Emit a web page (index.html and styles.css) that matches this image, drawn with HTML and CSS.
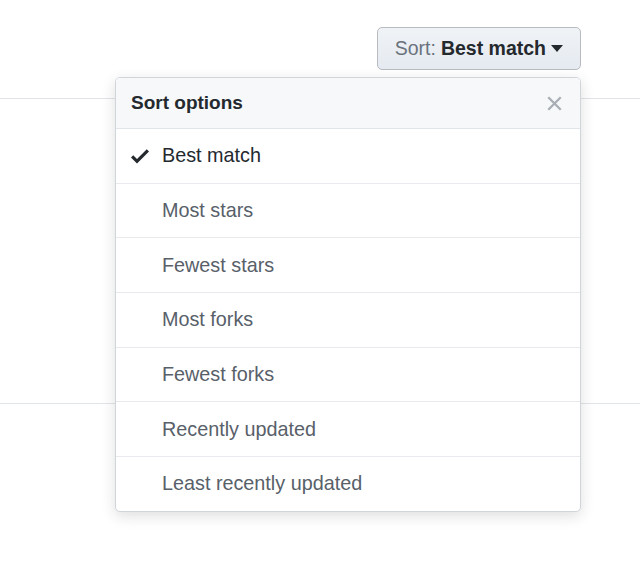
FILE: index.html
```html
<!DOCTYPE html>
<html lang="en">
<head>
    <meta charset="UTF-8">
    <meta name="viewport" content="width=device-width, initial-scale=1.0">
    <title>Sort options</title>
    <link rel="stylesheet" href="styles.css">
</head>
<body>
    <div class="toolbar">
        <div class="sort">
            <button class="sort-button">
                <span class="sort-label">Sort:</span>
                <span class="sort-value">Best match</span>
                <span class="caret"></span>
            </button>

            <div class="menu">
                <div class="menu-header">
                    <span class="menu-title">Sort options</span>
                    <svg class="menu-close" width="15" height="15" viewBox="0 0 12 12">
                        <path d="M1 1L11 11M11 1L1 11" stroke="currentColor" stroke-width="1.8" fill="none"/>
                    </svg>
                </div>
                <div class="menu-item selected">
                    <svg class="check" width="18" height="24" viewBox="0 0 12 16">
                        <path d="M12 5l-8 8-4-4 1.5-1.5L4 10l6.5-6.5L12 5z" fill="currentColor"/>
                    </svg>
                    <span>Best match</span>
                </div>
                <div class="menu-item"><span>Most stars</span></div>
                <div class="menu-item"><span>Fewest stars</span></div>
                <div class="menu-item"><span>Most forks</span></div>
                <div class="menu-item"><span>Fewest forks</span></div>
                <div class="menu-item"><span>Recently updated</span></div>
                <div class="menu-item"><span>Least recently updated</span></div>
            </div>
        </div>
    </div>

    <div class="results">
        <div class="result"></div>
    </div>
</body>
</html>
```

FILE: styles.css
```css
html, body {
    min-height: 100%;
    height: 100%;
}

body {
    font-family: "Liberation Sans", Arial, sans-serif;
    margin: 0;
    padding: 0;
    background-color: #fff;
    color: #24292e;
}

.toolbar {
    display: flex;
    justify-content: flex-end;
    padding: 27px 59px 0 0;
}

.sort {
    position: relative;
    z-index: 2;
}

.sort-button {
    display: flex;
    align-items: center;
    height: 43px;
    padding: 0 17px 0 17px;
    font-family: inherit;
    font-size: 19.5px;
    background-image: linear-gradient(-180deg, #f0f3f6 0%, #e6ebf1 90%);
    border: 1px solid #b8bcc1;
    border-radius: 5px;
    cursor: pointer;
}

.sort-label {
    color: #6a737d;
    margin-right: 5px;
}

.sort-value {
    font-weight: bold;
    color: #24292e;
}

.caret {
    margin-left: 5px;
    border-left: 6px solid transparent;
    border-right: 6px solid transparent;
    border-top: 7px solid #24292e;
}

.menu {
    position: absolute;
    top: 50px;
    right: 0;
    width: 464px;
    background: #fff;
    border: 1px solid #d1d5da;
    border-radius: 5px;
    box-shadow: 0 4px 14px rgba(27, 31, 35, 0.15);
    overflow: hidden;
}

.menu-header {
    display: flex;
    align-items: center;
    justify-content: space-between;
    height: 50px;
    padding: 0 18px 0 15px;
    background-color: #f6f8fa;
    border-bottom: 1px solid #e1e4e8;
}

.menu-title {
    font-size: 19px;
    font-weight: bold;
    color: #24292e;
}

.menu-close {
    color: #a8aeb4;
}

.menu-item {
    display: flex;
    align-items: center;
    height: 53.7px;
    padding-left: 46px;
    font-size: 19.8px;
    color: #586069;
    border-top: 1px solid #e8eaed;
}

.menu-header + .menu-item {
    border-top: none;
}

.menu-item.selected {
    position: relative;
    color: #24292e;
}

.check {
    position: absolute;
    left: 15px;
    color: #24292e;
}

.results {
    margin-top: 28px;
}

.result {
    height: 304px;
    border-top: 1px solid #e1e4e8;
    border-bottom: 1px solid #e1e4e8;
}
```
